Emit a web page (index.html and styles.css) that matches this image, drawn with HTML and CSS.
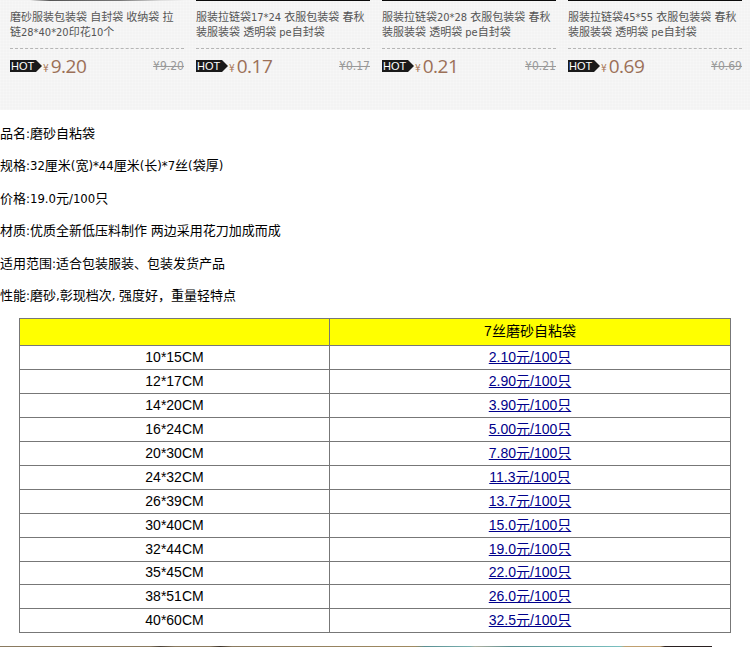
FILE: index.html
```html
<!DOCTYPE html>
<html lang="zh-CN">
<head>
  <meta charset="UTF-8">
  <meta name="viewport" content="width=device-width, initial-scale=1.0">
  <title>磨砂自粘袋</title>
  <link rel="stylesheet" href="styles.css">
</head>
<body>
  <!-- Related products strip -->
  <div class="related">
    <div class="card">
      <div class="thumb thumb-first"></div>
      <div class="card-title">磨砂服装包装袋 自封袋 收纳袋 拉链28*40*20印花10个</div>
      <div class="card-price">
        <span class="hot">HOT</span>
        <span class="yen">¥</span>
        <span class="price">9.20</span>
        <span class="old-price">¥9.20</span>
      </div>
    </div>
    <div class="card">
      <div class="thumb"></div>
      <div class="card-title">服装拉链袋17*24 衣服包装袋 春秋装服装袋 透明袋 pe自封袋</div>
      <div class="card-price">
        <span class="hot">HOT</span>
        <span class="yen">¥</span>
        <span class="price">0.17</span>
        <span class="old-price">¥0.17</span>
      </div>
    </div>
    <div class="card">
      <div class="thumb"></div>
      <div class="card-title">服装拉链袋20*28 衣服包装袋 春秋装服装袋 透明袋 pe自封袋</div>
      <div class="card-price">
        <span class="hot">HOT</span>
        <span class="yen">¥</span>
        <span class="price">0.21</span>
        <span class="old-price">¥0.21</span>
      </div>
    </div>
    <div class="card">
      <div class="thumb"></div>
      <div class="card-title">服装拉链袋45*55 衣服包装袋 春秋装服装袋 透明袋 pe自封袋</div>
      <div class="card-price">
        <span class="hot">HOT</span>
        <span class="yen">¥</span>
        <span class="price">0.69</span>
        <span class="old-price">¥0.69</span>
      </div>
    </div>
  </div>

  <!-- Product description -->
  <div class="desc">
    <p>品名:磨砂自粘袋</p>
    <p>规格:32厘米(宽)*44厘米(长)*7丝(袋厚)</p>
    <p>价格:19.0元/100只</p>
    <p>材质:优质全新低压料制作 两边采用花刀加成而成</p>
    <p>适用范围:适合包装服装、包装发货产品</p>
    <p>性能:磨砂,彰现档次, 强度好，重量轻特点</p>
  </div>

  <table class="sizes">
    <tr class="head">
      <td class="size-col"></td>
      <td>7丝磨砂自粘袋</td>
    </tr>
    <tr><td>10*15CM</td><td><a href="#">2.10元/100只</a></td></tr>
    <tr><td>12*17CM</td><td><a href="#">2.90元/100只</a></td></tr>
    <tr><td>14*20CM</td><td><a href="#">3.90元/100只</a></td></tr>
    <tr><td>16*24CM</td><td><a href="#">5.00元/100只</a></td></tr>
    <tr><td>20*30CM</td><td><a href="#">7.80元/100只</a></td></tr>
    <tr><td>24*32CM</td><td><a href="#">11.3元/100只</a></td></tr>
    <tr><td>26*39CM</td><td><a href="#">13.7元/100只</a></td></tr>
    <tr><td>30*40CM</td><td><a href="#">15.0元/100只</a></td></tr>
    <tr><td>32*44CM</td><td><a href="#">19.0元/100只</a></td></tr>
    <tr class="short"><td>35*45CM</td><td><a href="#">22.0元/100只</a></td></tr>
    <tr><td>38*51CM</td><td><a href="#">26.0元/100只</a></td></tr>
    <tr><td>40*60CM</td><td><a href="#">32.5元/100只</a></td></tr>
  </table>

  <div class="photo"></div>
</body>
</html>
```

FILE: styles.css
```css
body {
  margin: 0;
  height: 647px;
  overflow: hidden;
  background-color: #fff;
  color: #000;
  font-family: "DejaVu Sans Condensed", "Noto Sans CJK SC", sans-serif;
  font-size: 13px;
}

.related {
  display: flex;
  gap: 12px;
  height: 110px;
  padding: 0 8px 0 10px;
  background-color: #f3f3f3;
  background-image:
    repeating-linear-gradient(90deg, rgba(255,255,255,0.2) 0 1px, transparent 1px 3px),
    repeating-linear-gradient(0deg, rgba(255,255,255,0.2) 0 1px, transparent 1px 3px);
}

.card {
  width: 174px;
}

.thumb {
  height: 1px;
  background-color: #0a0a0a;
}

.thumb-first {
  background: linear-gradient(to right, #f3f3f3 20px, #555 40px, #777 110px, #ddd 150px, #f3f3f3 174px);
}

.card-title {
  height: 36px;
  margin-top: 9px;
  padding-bottom: 2px;
  color: #555;
  font-size: 11px;
  line-height: 15px;
}

.card-price {
  display: flex;
  align-items: center;
  height: 34px;
  border-top: 1px dashed #b5b5b5;
}

.hot {
  position: relative;
  width: 26px;
  height: 12px;
  margin-right: 7px;
  background-color: #1a1a1a;
  color: #fff;
  font-family: "Liberation Sans", sans-serif;
  font-size: 11px;
  line-height: 13px;
  padding-left: 1px;
  box-sizing: border-box;
}

.hot::after {
  content: "";
  position: absolute;
  left: 26px;
  top: 0;
  border-left: 6px solid #1a1a1a;
  border-top: 6px solid transparent;
  border-bottom: 6px solid transparent;
}

.yen {
  margin: 4px 2px 0 0;
  color: #a5714f;
  font-size: 10px;
}

.price {
  color: #9b7058;
  font-family: "Open Sans", sans-serif;
  font-size: 19px;
  letter-spacing: -0.5px;
}

.old-price {
  margin-left: auto;
  color: #999;
  font-size: 12px;
  text-decoration: line-through;
}

.desc {
  padding-top: 8px;
}

.desc p {
  height: 32.4px;
  margin: 0;
  line-height: 32.4px;
}

.sizes {
  width: 712px;
  margin: 6px 0 0 19px;
  border: 1px solid #222;
  border-collapse: collapse;
  font-family: "Liberation Sans", "Noto Sans CJK SC", sans-serif;
  font-size: 14px;
}

.sizes td {
  height: 21px;
  padding: 0 0 2px;
  border: 1px solid #777;
  text-align: center;
  line-height: 18px;
}

.sizes .size-col {
  width: 309px;
}

.sizes .short td {
  height: 20px;
}

.sizes .head td {
  height: 24px;
  background-color: #ff0;
}

.sizes a {
  color: #00008b;
}

.photo {
  width: 712px;
  height: 1px;
  margin-top: 13px;
  background: linear-gradient(to right, #8a7a60 0, #8a7a60 150px, #4a4036 160px, #8a7a60 175px, #8a7a60 210px, #3a3028 220px, #8a7a60 232px, #a08a60 415px, #5a8f92 425px, #7ab0b0 470px, #b0b0a0 475px, #5a8f92 510px, #7ac0c0 620px, #c0a070 625px, #c0a070 660px, #2a2020 665px, #2a2020 712px);
}
```
